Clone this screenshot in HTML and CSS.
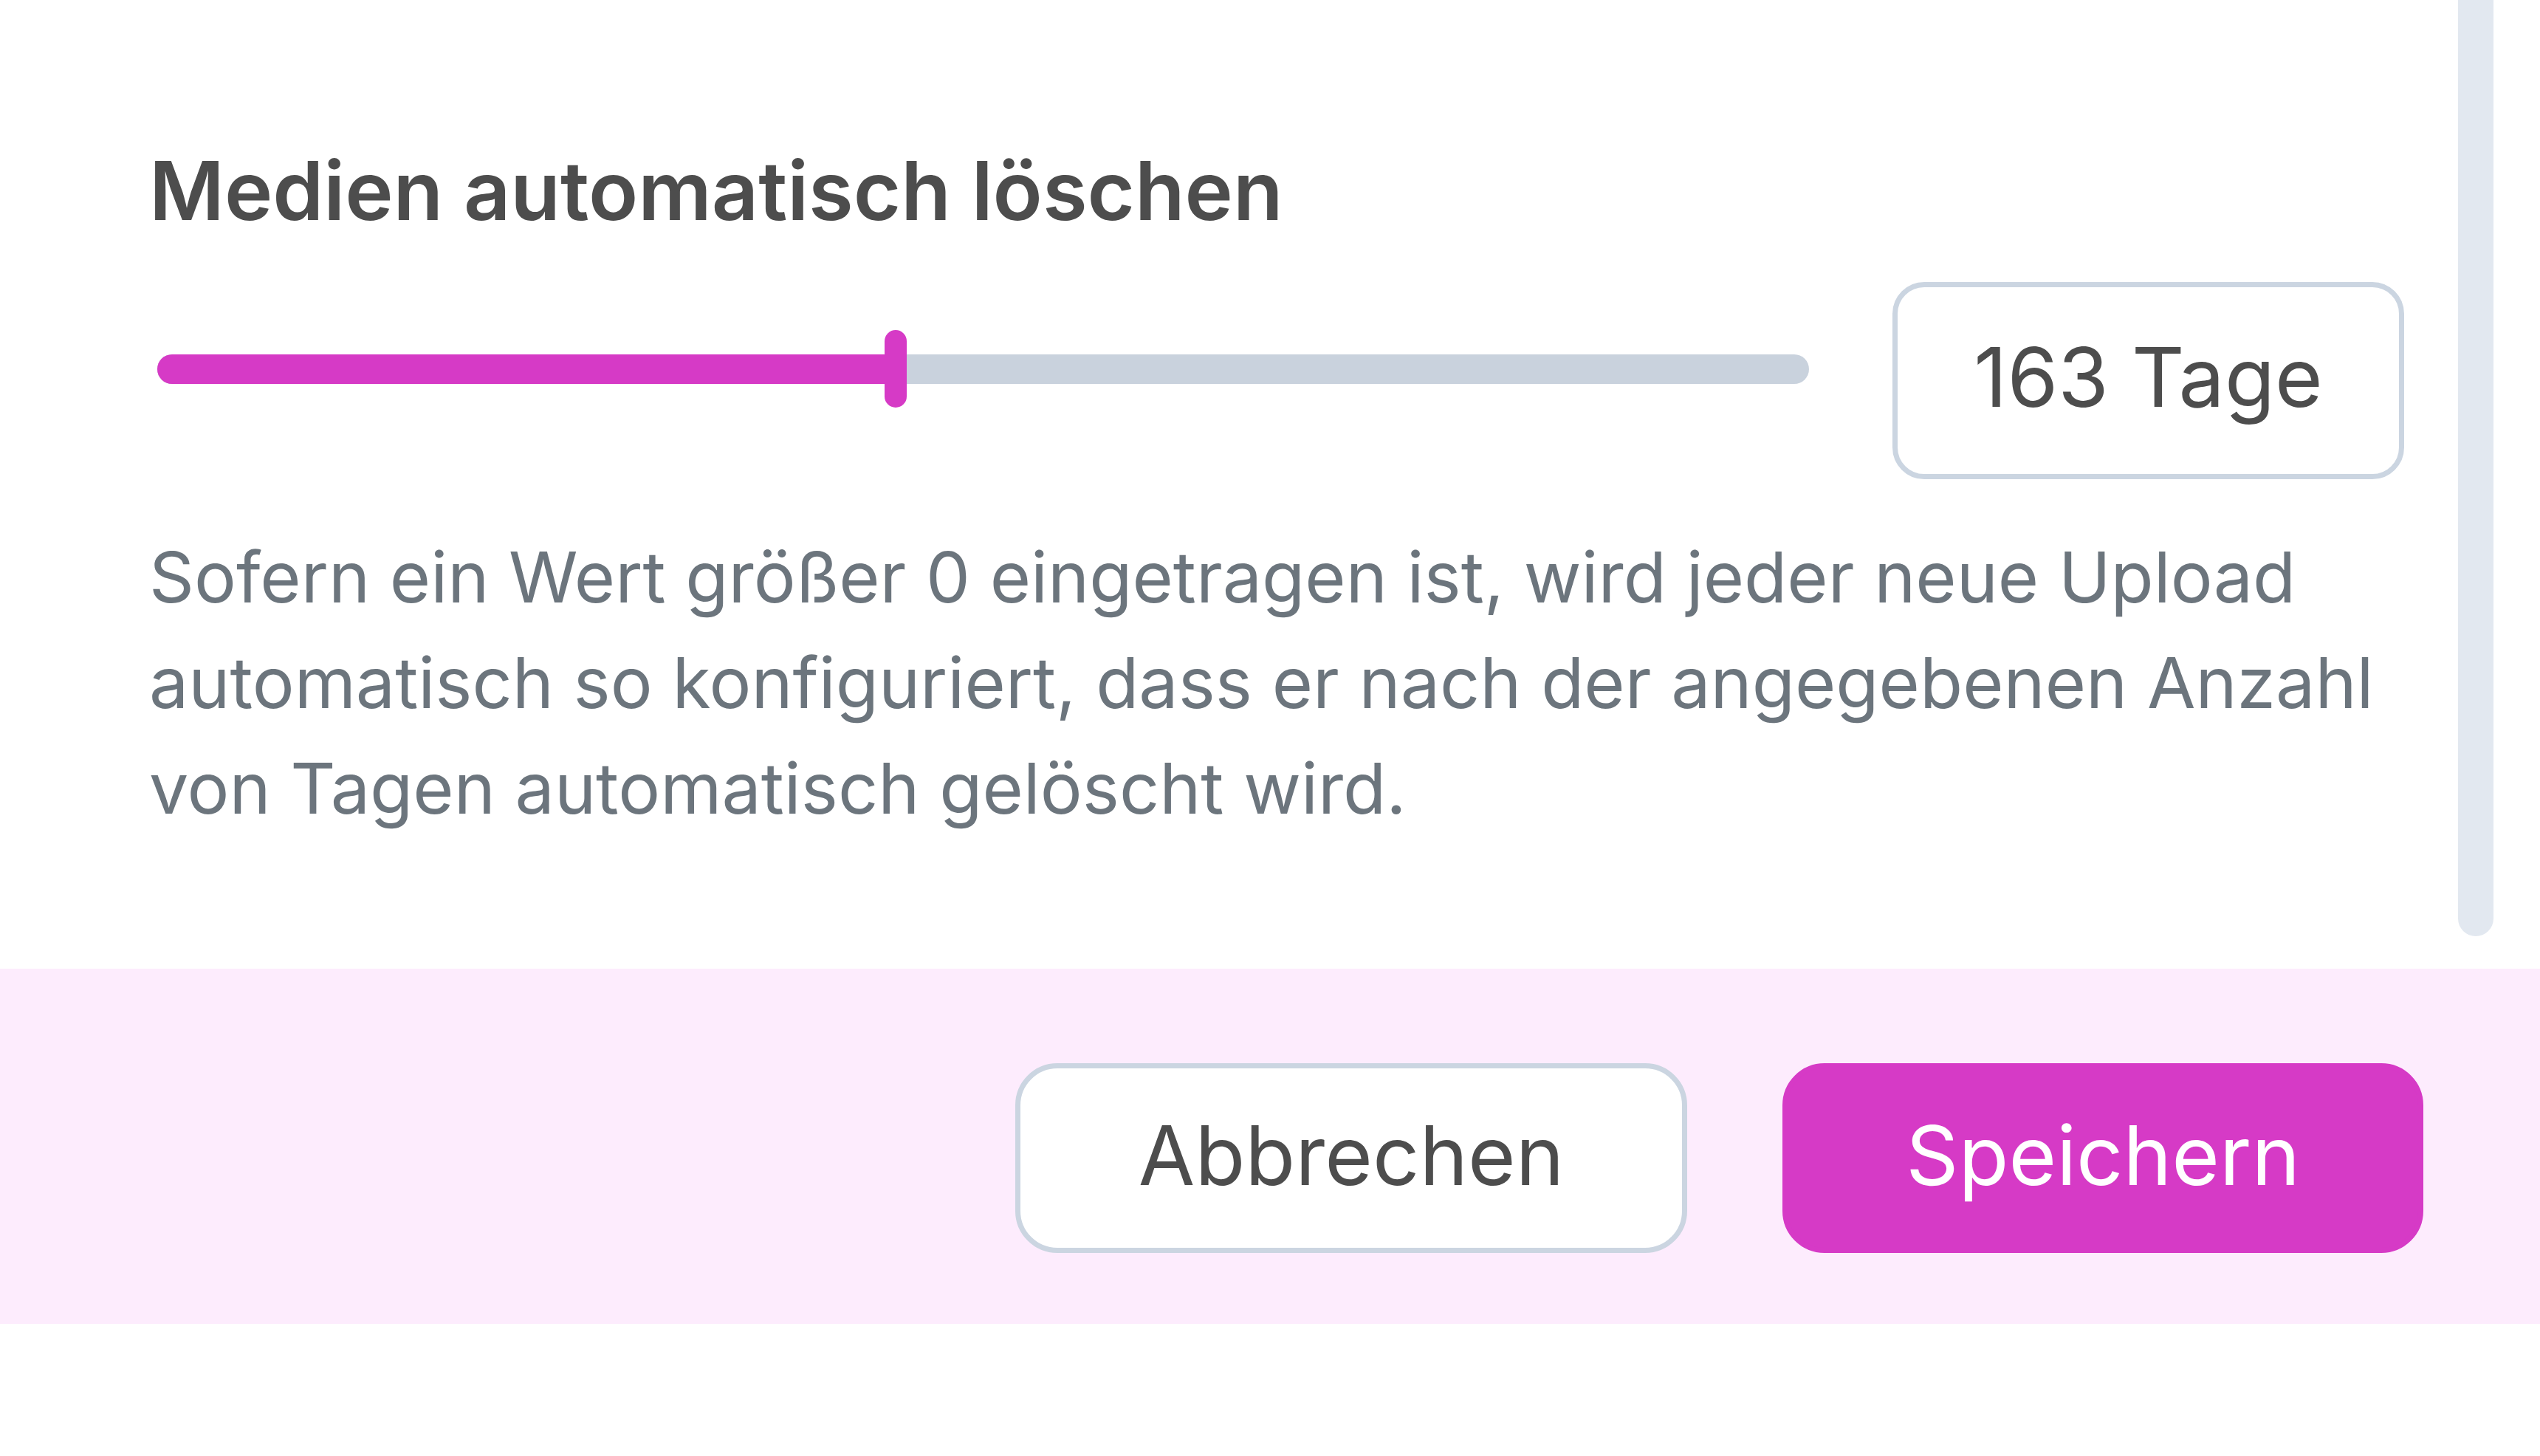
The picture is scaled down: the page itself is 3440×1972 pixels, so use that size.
FILE: index.html
```html
<!DOCTYPE html>
<html lang="de">
<head>
<meta charset="utf-8">
<title>Medien automatisch löschen</title>
<link rel="stylesheet" href="styles.css">
</head>
<body>
<div class="modal">
  <div class="scroll">
    <div class="content">
      <h2 class="title">Medien automatisch löschen</h2>
      <div class="slider-row">
        <div class="slider">
          <div class="track">
            <div class="fill" style="width:44.7%"></div>
            <div class="thumb" style="left:44.7%"></div>
          </div>
        </div>
        <div class="value">163 Tage</div>
      </div>
      <p class="help">Sofern ein Wert größer 0 eingetragen ist, wird jeder neue Upload automatisch so konfiguriert, dass er nach der angegebenen Anzahl von Tagen automatisch gelöscht wird.</p>
    </div>
    <div class="scrollbar"></div>
  </div>
  <footer class="footer">
    <button class="btn btn-secondary" type="button">Abbrechen</button>
    <button class="btn btn-primary" type="button">Speichern</button>
  </footer>
</div>
</body>
</html>
```
FILE: styles.css
```css
* { box-sizing: border-box; }
html, body { margin: 0; padding: 0; background: #ffffff; }
body { font-family: Inter, "Liberation Sans", sans-serif; }

.modal { width: 3440px; }

.scroll {
  position: relative;
  height: 1312px;
  padding: 179px 184px 0 202px;
  overflow: hidden;
}

.content { display: flex; flex-direction: column; }

.title {
  margin: 0;
  font-size: 110.5px;
  line-height: 159.6px;
  font-weight: 600;
  color: #4d4d4d;
}

.slider-row {
  margin-top: 43px;
  display: flex;
  align-items: center;
  gap: 113px;
}

.slider {
  flex: 1;
  padding-left: 11px;
  margin-bottom: 31px;
}

.track {
  position: relative;
  height: 40px;
  border-radius: 20px;
  background: #c9d2dd;
}

.fill {
  height: 100%;
  border-radius: 20px 0 0 20px;
  background: #d63ac6;
}

.thumb {
  position: absolute;
  top: 50%;
  width: 30px;
  height: 105px;
  margin-left: -15px;
  margin-top: -52.5px;
  border-radius: 15px;
  background: #d63ac6;
}

.value {
  width: 693px;
  height: 267px;
  border: 7px solid #cbd5e1;
  border-radius: 43px;
  display: flex;
  align-items: center;
  justify-content: center;
  padding-bottom: 10px;
  font-size: 111px;
  color: #4d4d4d;
}

.help {
  margin: 61px 0 0;
  font-size: 95px;
  line-height: 143px;
  color: #6c757d;
}

.scrollbar {
  position: absolute;
  top: 0;
  right: 63px;
  width: 48px;
  height: 1268px;
  border-radius: 0 0 24px 24px;
  background: #e2e8f0;
}

.footer {
  height: 481px;
  background: #fdecfd;
  display: flex;
  justify-content: flex-end;
  align-items: flex-start;
  gap: 129px;
  padding: 128px 158px 0 0;
}

.btn {
  height: 257px;
  border: 7px solid transparent;
  border-radius: 57px;
  padding: 0 160px 8px;
  font-family: Inter, "Liberation Sans", sans-serif;
  font-size: 111px;
  font-weight: 400;
  cursor: pointer;
}

.btn-secondary {
  background: #ffffff;
  border-color: #cbd5e1;
  color: #4d4d4d;
}

.btn-primary {
  background: #d63ac6;
  border-color: #d63ac6;
  color: #ffffff;
}
```
